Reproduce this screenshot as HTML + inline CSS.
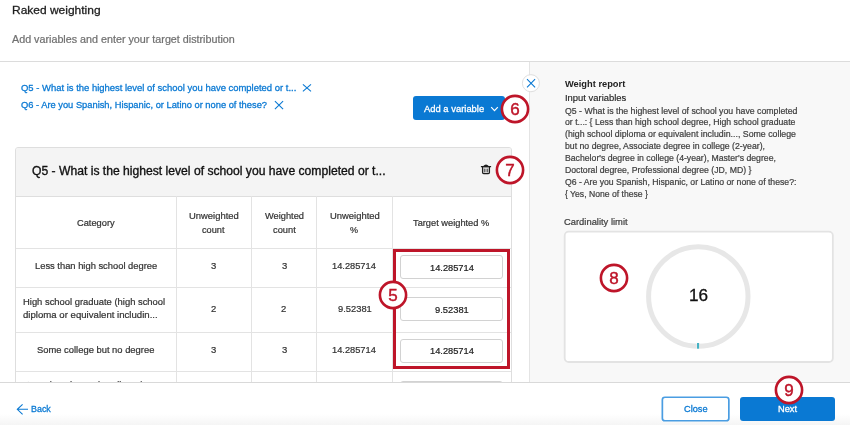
<!DOCTYPE html>
<html lang="en">
<head>
<meta charset="utf-8">
<title>Raked weighting</title>
<style>
*{box-sizing:border-box;margin:0;padding:0}
html,body{width:850px;height:425px;overflow:hidden;background:#fff}
body{font-family:"Liberation Sans",sans-serif;color:#333;position:relative}
#root{position:absolute;left:0;top:0;width:850px;height:425px;overflow:hidden;will-change:transform}
.abs{position:absolute}
.t{position:absolute;white-space:nowrap;transform-origin:0 0;display:block;-webkit-text-stroke:.22px currentColor}
#hr{left:0;top:61px;width:850px;height:1px;background:#dcdcdc}
#right{left:529px;top:62px;width:321px;height:321px;background:#f8f8f8;border-left:1px solid #e4e4e4}
#footer{left:0;top:382px;width:850px;height:43px;background:linear-gradient(#fff 0,#fff 31px,#f4f4f4 43px);border-top:1px solid #d9d9d9}
#card{left:15px;top:147px;width:497px;height:260px;border:1px solid #dedede;border-radius:3px 3px 0 0;background:#fff}
#cardhead{left:0;top:0;width:495px;height:49px;background:#f4f4f4;border-bottom:1px solid #dedede;border-radius:2px 2px 0 0}
.vl{position:absolute;top:196px;width:1px;height:200px;background:#e3e3e3}
.hl{position:absolute;left:16px;width:495px;height:1px;background:#e3e3e3}
.inp{position:absolute;left:400px;width:103px;height:24px;border:1px solid #d2d2d2;border-radius:3px;background:#fff}
#redbox{left:393px;top:249px;width:116.5px;height:119.5px;border:3px solid #be1529}
.badge text{font-family:"Liberation Sans",sans-serif}
#addbtn{left:413px;top:96.4px;width:92px;height:23.6px;border-radius:3px;background:#0a79d3}
#btnnext{left:740.4px;top:397px;width:95px;height:24px;border-radius:3px;background:#0a79d3}
</style>
</head>
<body>
<div id="root">
<div class="abs" id="hr"></div>
<div class="abs" id="right"></div>

<div class="abs" id="card"><div class="abs" id="cardhead"></div></div>
<div class="vl" style="left:176px"></div>
<div class="vl" style="left:251px"></div>
<div class="vl" style="left:316px"></div>
<div class="vl" style="left:392px"></div>
<div class="hl" style="top:248px"></div>
<div class="hl" style="top:287px"></div>
<div class="hl" style="top:332px"></div>
<div class="hl" style="top:371px"></div>
<div class="inp" style="top:255px"></div>
<div class="inp" style="top:297px"></div>
<div class="inp" style="top:339.4px"></div>
<div class="inp" style="top:381px"></div>
<span class="t" style="left:25.00px;top:379px;font-size:9.7px;line-height:11px;color:#333;transform:scaleX(0.9414)">Associate degree in college (2-</span>
<div class="abs" id="redbox"></div>

<div class="abs" id="footer"></div>

<svg class="abs" style="left:302px;top:83px" width="10" height="10" viewBox="0 0 10 10"><path d="M0.9 1.3L9 8.4M9 1.3L0.9 8.4" stroke="#0a79d3" stroke-width="1.1" fill="none"/></svg>
<svg class="abs" style="left:274px;top:100px" width="10" height="10" viewBox="0 0 10 10"><path d="M0.9 1.2L9.1 9.1M9.1 1.2L0.9 9.1" stroke="#0a79d3" stroke-width="1.1" fill="none"/></svg>

<div class="abs" id="addbtn"></div>
<svg class="abs" style="left:490px;top:105px" width="9" height="8" viewBox="0 0 9 8"><path d="M1.2 2.2L4.5 5.6L7.8 2.2" stroke="#fff" stroke-width="1.2" fill="none"/></svg>

<svg class="abs" style="left:480px;top:164px" width="12" height="12" viewBox="0 0 12 12"><path d="M4.4 4.6V8.4M6 4.6V8.4M7.6 4.6V8.4" stroke="#5a5a5a" stroke-width="1" fill="none"/><path d="M3.8 2.5Q6 -0.2 8.2 2.5Z" fill="#555" stroke="#1e1e1e" stroke-width="1.3" stroke-linejoin="round"/><path d="M0.9 2.6H11.1M2.6 2.8V8.6Q2.6 9.7 3.7 9.7H8.3Q9.4 9.7 9.4 8.6V2.8" stroke="#1e1e1e" stroke-width="1.3" fill="none" stroke-linejoin="round"/></svg>

<svg class="abs" style="left:519px;top:71px" width="24" height="24" viewBox="519 71 24 24"><circle cx="530.9" cy="83.2" r="8.55" fill="#fff" stroke="#dedede" stroke-width="1"/><path d="M527 79.2L535.1 87.4M535.1 79.2L527 87.4" stroke="#0a79d3" stroke-width="1.1" fill="none"/></svg>

<svg class="abs" style="left:560px;top:228px" width="280" height="140" viewBox="560 228 280 140"><rect x="564.7" y="231.7" width="268.15" height="130.3" rx="4" fill="#fff" stroke="#e3e3e3" stroke-width="1.8"/></svg>
<svg class="abs" style="left:643px;top:241px" width="112" height="112" viewBox="0 0 112 112"><circle cx="55.3" cy="55.5" r="49.7" fill="none" stroke="#e7e7e7" stroke-width="5"/><rect x="53.7" y="101.6" width="2.7" height="6.4" fill="#fff" opacity=".7"/><rect x="54" y="102" width="2.1" height="5.7" fill="#45b2c4"/></svg>

<svg class="abs" style="left:16px;top:403px" width="13" height="13" viewBox="0 0 13 13"><path d="M12 6.3H1.6M6.6 1.3L1.3 6.3L6.6 11.3" stroke="#0a79d3" stroke-width="1.1" fill="none"/></svg>
<svg class="abs" style="left:658px;top:393px" width="76" height="32" viewBox="658 393 76 32"><rect x="662.35" y="397.25" width="66.5" height="23.5" rx="2.6" fill="#fff" stroke="#4a9de2" stroke-width="1.7"/></svg>
<div class="abs" id="btnnext"></div>

<span class="t" style="left:12.00px;top:3px;font-size:11.8px;line-height:14px;color:#202020;transform:scaleX(1.0155);-webkit-text-stroke-width:0.28px">Raked weighting</span>
<span class="t" style="left:12.00px;top:34px;font-size:10.4px;line-height:11px;color:#707070;transform:scaleX(1.0340)">Add variables and enter your target distribution</span>
<span class="t" style="left:20.60px;top:82px;font-size:9.7px;line-height:11px;color:#0a79d3;transform:scaleX(0.9756);-webkit-text-stroke-width:0.3px">Q5 - What is the highest level of school you have completed or t...</span>
<span class="t" style="left:20.60px;top:99px;font-size:9.7px;line-height:11px;color:#0a79d3;transform:scaleX(0.9617);-webkit-text-stroke-width:0.3px">Q6 - Are you Spanish, Hispanic, or Latino or none of these?</span>
<span class="t" style="left:424.00px;top:103px;font-size:9.7px;line-height:11px;color:#fff;transform:scaleX(0.9716);-webkit-text-stroke-width:0.3px">Add a variable</span>
<span class="t" style="left:32.40px;top:164px;font-size:12px;line-height:14px;color:#111;transform:scaleX(1.0115);-webkit-text-stroke-width:0.35px">Q5 - What is the highest level of school you have completed or t...</span>
<span class="t" style="left:76.60px;top:217px;font-size:9.7px;line-height:11px;color:#333;transform:scaleX(0.9578)">Category</span>
<span class="t" style="left:189.00px;top:210px;font-size:9.7px;line-height:11px;color:#333;transform:scaleX(0.9729)">Unweighted</span>
<span class="t" style="left:202.40px;top:224px;font-size:9.7px;line-height:11px;color:#333;transform:scaleX(0.9497)">count</span>
<span class="t" style="left:264.60px;top:210px;font-size:9.7px;line-height:11px;color:#333;transform:scaleX(0.9563)">Weighted</span>
<span class="t" style="left:272.60px;top:224px;font-size:9.7px;line-height:11px;color:#333;transform:scaleX(0.9581)">count</span>
<span class="t" style="left:329.60px;top:210px;font-size:9.7px;line-height:11px;color:#333;transform:scaleX(0.9729)">Unweighted</span>
<span class="t" style="left:350.00px;top:224px;font-size:9.7px;line-height:11px;color:#333;transform:scaleX(0.9333)">%</span>
<span class="t" style="left:413.40px;top:217px;font-size:9.7px;line-height:11px;color:#333;transform:scaleX(0.9565)">Target weighted %</span>
<span class="t" style="left:34.60px;top:260px;font-size:9.7px;line-height:11px;color:#333;transform:scaleX(0.9653)">Less than high school degree</span>
<span class="t" style="left:211.45px;top:260px;font-size:9.7px;line-height:11px;color:#333;transform:scaleX(0.9800)">3</span>
<span class="t" style="left:281.65px;top:260px;font-size:9.7px;line-height:11px;color:#333;transform:scaleX(0.9800)">3</span>
<span class="t" style="left:332.00px;top:260px;font-size:9.7px;line-height:11px;color:#333;transform:scaleX(0.9568)">14.285714</span>
<span class="t" style="left:429.60px;top:262px;font-size:9.7px;line-height:11px;color:#222;transform:scaleX(0.9568)">14.285714</span>
<span class="t" style="left:23.00px;top:296px;font-size:9.7px;line-height:11px;color:#333;transform:scaleX(0.9704)">High school graduate (high school</span>
<span class="t" style="left:23.00px;top:309px;font-size:9.7px;line-height:11px;color:#333;transform:scaleX(0.9925)">diploma or equivalent includin...</span>
<span class="t" style="left:211.25px;top:303px;font-size:9.7px;line-height:11px;color:#333;transform:scaleX(0.9800)">2</span>
<span class="t" style="left:281.45px;top:303px;font-size:9.7px;line-height:11px;color:#333;transform:scaleX(0.9800)">2</span>
<span class="t" style="left:337.60px;top:303px;font-size:9.7px;line-height:11px;color:#333;transform:scaleX(0.9645)">9.52381</span>
<span class="t" style="left:434.80px;top:304px;font-size:9.7px;line-height:11px;color:#222;transform:scaleX(0.9645)">9.52381</span>
<span class="t" style="left:37.00px;top:344px;font-size:9.7px;line-height:11px;color:#333;transform:scaleX(0.9686)">Some college but no degree</span>
<span class="t" style="left:211.45px;top:344px;font-size:9.7px;line-height:11px;color:#333;transform:scaleX(0.9800)">3</span>
<span class="t" style="left:281.65px;top:344px;font-size:9.7px;line-height:11px;color:#333;transform:scaleX(0.9800)">3</span>
<span class="t" style="left:332.00px;top:344px;font-size:9.7px;line-height:11px;color:#333;transform:scaleX(0.9568)">14.285714</span>
<span class="t" style="left:429.60px;top:345px;font-size:9.7px;line-height:11px;color:#222;transform:scaleX(0.9568)">14.285714</span>
<span class="t" style="left:565.00px;top:78px;font-size:9.7px;line-height:11px;color:#222;transform:scaleX(0.9597);font-weight:bold;-webkit-text-stroke-width:0px">Weight report</span>
<span class="t" style="left:565.00px;top:92px;font-size:9.7px;line-height:11px;color:#222;transform:scaleX(0.9721);-webkit-text-stroke-width:0.15px">Input variables</span>
<span class="t" style="left:565.00px;top:106px;font-size:9.0px;line-height:10px;color:#3e3e3e;transform:scaleX(0.9719)">Q5 - What is the highest level of school you have completed</span>
<span class="t" style="left:565.00px;top:117px;font-size:9.0px;line-height:10px;color:#3e3e3e;transform:scaleX(0.9654)">or t...: { Less than high school degree, High school graduate</span>
<span class="t" style="left:565.00px;top:129px;font-size:9.0px;line-height:10px;color:#3e3e3e;transform:scaleX(0.9762)">(high school diploma or equivalent includin..., Some college</span>
<span class="t" style="left:565.00px;top:141px;font-size:9.0px;line-height:10px;color:#3e3e3e;transform:scaleX(0.9679)">but no degree, Associate degree in college (2-year),</span>
<span class="t" style="left:565.00px;top:153px;font-size:9.0px;line-height:10px;color:#3e3e3e;transform:scaleX(0.9649)">Bachelor's degree in college (4-year), Master's degree,</span>
<span class="t" style="left:565.00px;top:165px;font-size:9.0px;line-height:10px;color:#3e3e3e;transform:scaleX(0.9654)">Doctoral degree, Professional degree (JD, MD) }</span>
<span class="t" style="left:565.00px;top:177px;font-size:9.0px;line-height:10px;color:#3e3e3e;transform:scaleX(0.9636)">Q6 - Are you Spanish, Hispanic, or Latino or none of these?:</span>
<span class="t" style="left:565.00px;top:189px;font-size:9.0px;line-height:10px;color:#3e3e3e;transform:scaleX(0.9570)">{ Yes, None of these }</span>
<span class="t" style="left:563.60px;top:217px;font-size:9.3px;line-height:10px;color:#3e3e3e;transform:scaleX(1.0088)">Cardinality limit</span>
<span class="t" style="left:688.79px;top:286px;font-size:17px;line-height:19px;color:#111;transform:scaleX(1.0083);-webkit-text-stroke-width:0.3px">16</span>
<span class="t" style="left:31.40px;top:403px;font-size:9.6px;line-height:11px;color:#0a79d3;transform:scaleX(0.9289);-webkit-text-stroke-width:0.3px">Back</span>
<span class="t" style="left:683.80px;top:403px;font-size:9.6px;line-height:11px;color:#0a79d3;transform:scaleX(0.9590);-webkit-text-stroke-width:0.3px">Close</span>
<span class="t" style="left:778.00px;top:403px;font-size:9.6px;line-height:11px;color:#fff;transform:scaleX(0.9671);-webkit-text-stroke-width:0.3px">Next</span>

<svg class="abs badge" style="left:498.6px;top:92.9px" width="32" height="32" viewBox="0 0 32 32"><circle cx="16" cy="16" r="13.1" fill="#fff" stroke="#be1529" stroke-width="2.6"/><text x="16" y="22" text-anchor="middle" font-size="17" fill="#be1529" stroke="#be1529" stroke-width=".45">6</text></svg>
<svg class="abs badge" style="left:494.0px;top:153.8px" width="32" height="32" viewBox="0 0 32 32"><circle cx="16" cy="16" r="13.1" fill="#fff" stroke="#be1529" stroke-width="2.6"/><text x="16" y="22" text-anchor="middle" font-size="17" fill="#be1529" stroke="#be1529" stroke-width=".45">7</text></svg>
<svg class="abs badge" style="left:377.0px;top:279.3px" width="32" height="32" viewBox="0 0 32 32"><circle cx="16" cy="16" r="13.1" fill="#fff" stroke="#be1529" stroke-width="2.6"/><text x="16" y="22" text-anchor="middle" font-size="17" fill="#be1529" stroke="#be1529" stroke-width=".45">5</text></svg>
<svg class="abs badge" style="left:597.7px;top:262.0px" width="32" height="32" viewBox="0 0 32 32"><circle cx="16" cy="16" r="13.1" fill="#fff" stroke="#be1529" stroke-width="2.6"/><text x="16" y="22" text-anchor="middle" font-size="17" fill="#be1529" stroke="#be1529" stroke-width=".45">8</text></svg>
<svg class="abs badge" style="left:772.7px;top:373.8px" width="32" height="32" viewBox="0 0 32 32"><circle cx="16" cy="16" r="13.1" fill="#fff" stroke="#be1529" stroke-width="2.6"/><text x="16" y="22" text-anchor="middle" font-size="17" fill="#be1529" stroke="#be1529" stroke-width=".45">9</text></svg>
</div>
</body>
</html>
